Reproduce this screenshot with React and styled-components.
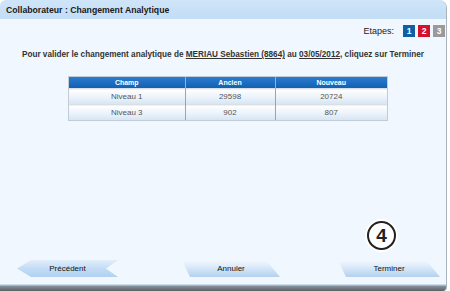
import React from 'react';
import styled, { createGlobalStyle } from 'styled-components';

const GlobalStyle = createGlobalStyle`
  html, body {
    margin: 0;
    padding: 0;
    background: #ffffff;
  }
  body {
    font-family: "Liberation Sans", Arial, Helvetica, sans-serif;
  }
`;

const Window = styled.div`
  width: 447px;
  height: 291px;
  box-sizing: border-box;
  display: flex;
  flex-direction: column;
  background: #f0f7fe;
  border-right: 1px solid #a9b4bf;
  border-radius: 6px 8px 4px 0;
  overflow: hidden;
`;

const TitleBar = styled.div`
  height: 19px;
  flex: none;
  display: flex;
  align-items: center;
  padding-left: 6px;
  background: linear-gradient(#cfe5f9, #c3ddf5);
  font-size: 8.7px;
  font-weight: bold;
  color: #1a1a1a;
`;

const StepsRow = styled.div`
  display: flex;
  justify-content: flex-end;
  align-items: center;
  gap: 3px;
  margin-top: 6px;
  padding-right: 1px;
  font-size: 9px;
  color: #222;
`;

const StepsLabel = styled.span`
  margin-right: 6px;
`;

const Step = styled.span`
  width: 12px;
  height: 12px;
  display: flex;
  align-items: center;
  justify-content: center;
  background: ${p => p.$color};
  color: #fff;
  font-size: 8.5px;
  font-weight: bold;
`;

const Message = styled.div`
  margin-top: 13px;
  text-align: center;
  font-size: 8.2px;
  font-weight: bold;
  color: #333;
`;

const Link = styled.span`
  text-decoration: underline;
`;

const Table = styled.table`
  margin: 18px 0 0 69px;
  width: 318px;
  border-collapse: collapse;
  table-layout: fixed;
  font-size: 8px;
  box-shadow: 0 0 0 1px #c2ccd6;
`;

const HeadCell = styled.th`
  height: 11px;
  padding: 0;
  background: linear-gradient(#2b7bd0, #1260b2);
  color: #fff;
  font-size: 7px;
  font-weight: bold;
  border-left: 1px solid #8fb4da;
  &:first-child { border-left: none; }
`;

const Cell = styled.td`
  height: 15px;
  padding: 0;
  text-align: center;
  color: #555;
  background: linear-gradient(#ffffff, #e8f1fa 60%, #d4e5f4);
  border-left: 1px solid #9aa4ae;
  border-top: 1px solid #d9dfe5;
  &:first-child { border-left: none; }
`;

const Spacer = styled.div`
  flex: 1;
`;

const BadgeRow = styled.div`
  display: flex;
  justify-content: flex-end;
  padding-right: 50px;
`;

const StepBadge = styled.div`
  width: 25px;
  height: 25px;
  border: 2.5px solid #222;
  border-radius: 50%;
  background: #fff;
  display: flex;
  align-items: center;
  justify-content: center;
  font-size: 19px;
  font-weight: bold;
  color: #222;
  box-shadow: 0 0 0 2px #fff;
`;

const ButtonBar = styled.div`
  display: flex;
  align-items: center;
  padding: 10px 0 0 17px;
  height: 17px;
`;

const NavButton = styled.div`
  width: ${p => p.$width}px;
  height: 17px;
  margin-left: ${p => p.$offset}px;
  display: flex;
  align-items: center;
  justify-content: center;
  font-size: 8px;
  color: #111;
  clip-path: ${p => p.$back
    ? 'polygon(0 50%, 14px 0, 100% 0, calc(100% - 12px) 50%, 100% 100%, 14px 100%)'
    : 'polygon(0 0, calc(100% - 14px) 0, 100% 100%, 8px 100%)'};
  background: ${p => p.$back
    ? 'linear-gradient(#e2eefa, #c0dbf4 55%, #b2d1f0)'
    : 'linear-gradient(#f4f9fe, #d8e8f8 45%, #b3d1ef)'};
`;

const BottomBand = styled.div`
  height: 7px;
  margin-top: 7px;
  flex: none;
  background: linear-gradient(#c7dcef 0, #c7dcef 1px, #8a9097 2px, #5c6167);
`;

export default function App() {
  return (
    <>
      <GlobalStyle />
      <Window>
        <TitleBar>Collaborateur : Changement Analytique</TitleBar>
        <StepsRow>
          <StepsLabel>Etapes:</StepsLabel>
          <Step $color="#0f5fa6">1</Step>
          <Step $color="#d3122c">2</Step>
          <Step $color="#9a9a9a">3</Step>
        </StepsRow>
        <Message>
          Pour valider le changement analytique de <Link>MERIAU Sebastien (8864)</Link> au <Link>03/05/2012</Link>, cliquez sur Terminer
        </Message>
        <Table>
          <colgroup>
            <col style={{ width: 116 }} />
            <col style={{ width: 90 }} />
            <col style={{ width: 112 }} />
          </colgroup>
          <thead>
            <tr>
              <HeadCell>Champ</HeadCell>
              <HeadCell>Ancien</HeadCell>
              <HeadCell>Nouveau</HeadCell>
            </tr>
          </thead>
          <tbody>
            <tr>
              <Cell>Niveau 1</Cell>
              <Cell>29598</Cell>
              <Cell>20724</Cell>
            </tr>
            <tr>
              <Cell>Niveau 3</Cell>
              <Cell>902</Cell>
              <Cell>807</Cell>
            </tr>
          </tbody>
        </Table>
        <Spacer />
        <BadgeRow>
          <StepBadge>4</StepBadge>
        </BadgeRow>
        <ButtonBar>
          <NavButton $back $width={101} $offset={0}>Précédent</NavButton>
          <NavButton $width={98} $offset={64}>Annuler</NavButton>
          <NavButton $width={102} $offset={58}>Terminer</NavButton>
        </ButtonBar>
        <BottomBand />
      </Window>
    </>
  );
}
